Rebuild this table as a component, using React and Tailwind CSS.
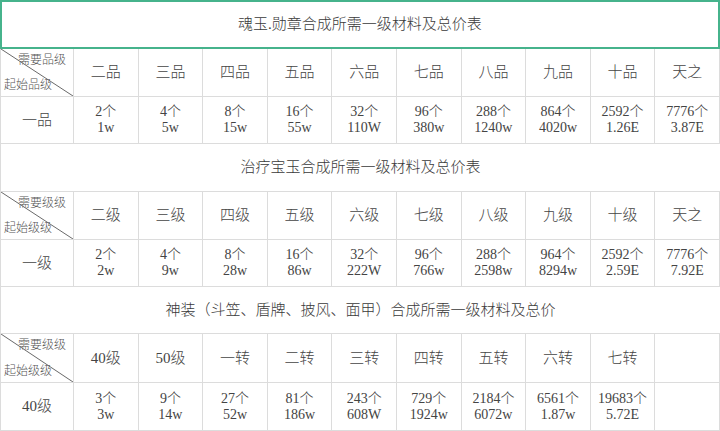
import React from "react"

const font = { fontFamily: '"Liberation Serif", "Noto Sans CJK SC", serif' }

const tables = [
  {
    title: "魂玉.勋章合成所需一级材料及总价表",
    top: "需要品级",
    bottom: "起始品级",
    start: "一品",
    heads: ["二品", "三品", "四品", "五品", "六品", "七品", "八品", "九品", "十品", "天之"],
    vals: [
      ["2个", "1w"], ["4个", "5w"], ["8个", "15w"], ["16个", "55w"], ["32个", "110W"],
      ["96个", "380w"], ["288个", "1240w"], ["864个", "4020w"], ["2592个", "1.26E"], ["7776个", "3.87E"],
    ],
  },
  {
    title: "治疗宝玉合成所需一级材料及总价表",
    top: "需要级级",
    bottom: "起始级级",
    start: "一级",
    heads: ["二级", "三级", "四级", "五级", "六级", "七级", "八级", "九级", "十级", "天之"],
    vals: [
      ["2个", "2w"], ["4个", "9w"], ["8个", "28w"], ["16个", "86w"], ["32个", "222W"],
      ["96个", "766w"], ["288个", "2598w"], ["964个", "8294w"], ["2592个", "2.59E"], ["7776个", "7.92E"],
    ],
  },
  {
    title: "神装（斗笠、盾牌、披风、面甲）合成所需一级材料及总价",
    top: "需要级级",
    bottom: "起始级级",
    start: "40级",
    heads: ["40级", "50级", "一转", "二转", "三转", "四转", "五转", "六转", "七转", ""],
    vals: [
      ["3个", "3w"], ["9个", "14w"], ["27个", "52w"], ["81个", "186w"], ["243个", "608W"],
      ["729个", "1924w"], ["2184个", "6072w"], ["6561个", "1.87w"], ["19683个", "5.72E"], null,
    ],
  },
]

const heights = [
  ["h-[49px]", "h-[48px]", "h-[47px]"],
  ["h-[48px]", "h-[48px]", "h-[47px]"],
  ["h-[47px]", "h-[49px]", "h-[48px]"],
]

function Corner({ top, bottom }) {
  return (
    <div className="relative h-full border-r border-b border-l border-[#dcdcdc] flex flex-col justify-between px-[3px] py-[2px] text-[12px] leading-[18px] text-[#555]">
      <svg className="absolute inset-0 w-full h-full" preserveAspectRatio="none" viewBox="0 0 74 48">
        <line x1="0" y1="0" x2="74" y2="48" stroke="#666" strokeWidth="1" />
      </svg>
      <div className="text-right pr-[4px]">{top}</div>
      <div className="text-left">{bottom}</div>
    </div>
  )
}

function Section({ t, i }) {
  const [h1, h2, h3] = heights[i]
  const first = i === 0
  return (
    <div>
      <div
        className={`${h1} flex items-center justify-center text-[15px] text-[#3a3a3a] ${
          first ? "border-2 border-[#46b38c]" : "border-b border-l border-[#dcdcdc]"
        }`}
      >
        {t.title}
      </div>
      <div className={`grid grid-cols-[74px_repeat(10,1fr)] ${h2}`}>
        <Corner top={t.top} bottom={t.bottom} />
        {t.heads.map((h, k) => (
          <div key={k} className="border-r border-b border-[#dcdcdc] flex items-center justify-center text-[15px] text-[#444]">
            {h}
          </div>
        ))}
      </div>
      <div className={`grid grid-cols-[74px_repeat(10,1fr)] ${h3}`}>
        <div className="border-r border-b border-l border-[#dcdcdc] flex items-center justify-center text-[15px] text-[#444]">
          {t.start}
        </div>
        {t.vals.map((v, k) => (
          <div key={k} className="border-r border-b border-[#dcdcdc] flex flex-col items-center justify-center text-[14px] leading-[16px] text-[#444]">
            {v && (
              <>
                <span>{v[0]}</span>
                <span>{v[1]}</span>
              </>
            )}
          </div>
        ))}
      </div>
    </div>
  )
}

export default function App() {
  return (
    <div className="w-[720px] h-[431px] bg-white overflow-hidden font-light" style={font}>
      {tables.map((t, i) => (
        <Section key={i} t={t} i={i} />
      ))}
    </div>
  )
}
